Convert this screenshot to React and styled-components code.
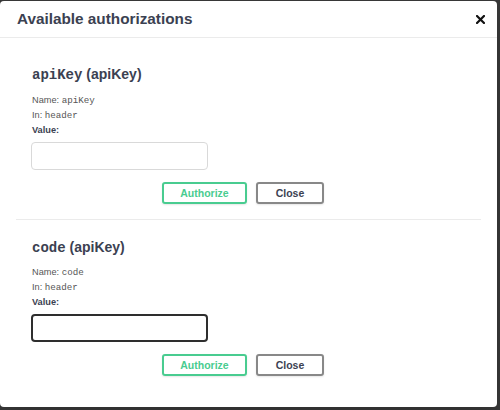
import React from "react";
import styled, { createGlobalStyle } from "styled-components";

const GlobalStyle = createGlobalStyle`
  html, body {
    margin: 0;
    padding: 0;
    background: #3a3a3a;
    font-family: "Liberation Sans", Arial, sans-serif;
  }
`;

const Page = styled.div`
  width: 500px;
  height: 410px;
  overflow: hidden;
  padding-top: 1px;
  box-sizing: border-box;
`;

const Modal = styled.div`
  width: 497px;
  height: 406px;
  background: #fff;
  border-radius: 4px;
  overflow: hidden;
  box-shadow: 0 10px 30px 0 rgba(0, 0, 0, 0.2);
`;

const Header = styled.div`
  height: 36px;
  display: flex;
  align-items: center;
  justify-content: space-between;
  padding: 0 12px 0 17px;
  border-bottom: 1px solid #ebebeb;
`;

const Title = styled.h3`
  margin: 0;
  font-size: 15.3px;
  font-weight: 700;
  color: #3b4151;
`;

const CloseIcon = styled.button`
  border: none;
  background: none;
  padding: 0;
  width: 9px;
  height: 9px;
  display: flex;
  cursor: pointer;
`;

const Content = styled.div`
  padding: 9px 16px 0;
`;

const Section = styled.div`
  padding: 19px 16px 15px;
  border-bottom: ${(p) => (p.last ? "none" : "1px solid #ebebeb")};
`;

const SchemeName = styled.h4`
  margin: 0 0 8.5px;
  font-size: 14px;
  line-height: 17px;
  font-weight: 700;
  color: #3b4151;
`;

const Mono = styled.code`
  font-family: "Liberation Mono", "DejaVu Sans Mono", monospace;
  font-weight: inherit;
`;

const Info = styled.p`
  margin: 0;
  font-size: 9.2px;
  line-height: 15px;
  color: #555;
`;

const Label = styled.label`
  display: block;
  font-size: 9.2px;
  line-height: 15px;
  font-weight: 700;
  color: #3b4151;
`;

const Input = styled.input`
  display: block;
  box-sizing: border-box;
  width: 177px;
  height: 28px;
  margin: 4px 0 0 -1px;
  border-radius: 4px;
  border: ${(p) => (p.focused ? "2px solid #2e2e2e" : "1px solid #d9d9d9")};
  background: #fff;
  outline: none;
`;

const Actions = styled.div`
  display: flex;
  justify-content: flex-end;
  gap: 9px;
  margin-top: 12px;
  padding-right: 141px;
`;

const Button = styled.button`
  box-sizing: border-box;
  height: 22px;
  width: ${(p) => p.w}px;
  padding: 0;
  border-radius: 3px;
  background: transparent;
  font-family: "Liberation Sans", Arial, sans-serif;
  font-size: 10.5px;
  font-weight: 700;
  border: 2px solid ${(p) => (p.primary ? "#49cc90" : "#888")};
  color: ${(p) => (p.primary ? "#49cc90" : "#3b4151")};
  box-shadow: 0 1px 2px rgba(0, 0, 0, 0.1);
`;

const schemes = [
  { name: "apiKey", paramName: "apiKey" },
  { name: "code", paramName: "code", focused: true },
];

export default function App() {
  return (
    <Page>
      <GlobalStyle />
      <Modal>
        <Header>
          <Title>Available authorizations</Title>
          <CloseIcon aria-label="Close">
            <svg width="9" height="9" viewBox="0 0 9 9">
              <path d="M1 1L8 8M8 1L1 8" stroke="#111" strokeWidth="2.2" strokeLinecap="square" />
            </svg>
          </CloseIcon>
        </Header>
        <Content>
          {schemes.map((s, i) => (
            <Section key={s.name} last={i === schemes.length - 1}>
              <SchemeName>
                <Mono>{s.name}</Mono> (apiKey)
              </SchemeName>
              <Info>
                Name: <Mono>{s.paramName}</Mono>
              </Info>
              <Info>
                In: <Mono>header</Mono>
              </Info>
              <Label>Value:</Label>
              <Input type="text" focused={s.focused} />
              <Actions>
                <Button primary w={85}>Authorize</Button>
                <Button w={68}>Close</Button>
              </Actions>
            </Section>
          ))}
        </Content>
      </Modal>
    </Page>
  );
}
